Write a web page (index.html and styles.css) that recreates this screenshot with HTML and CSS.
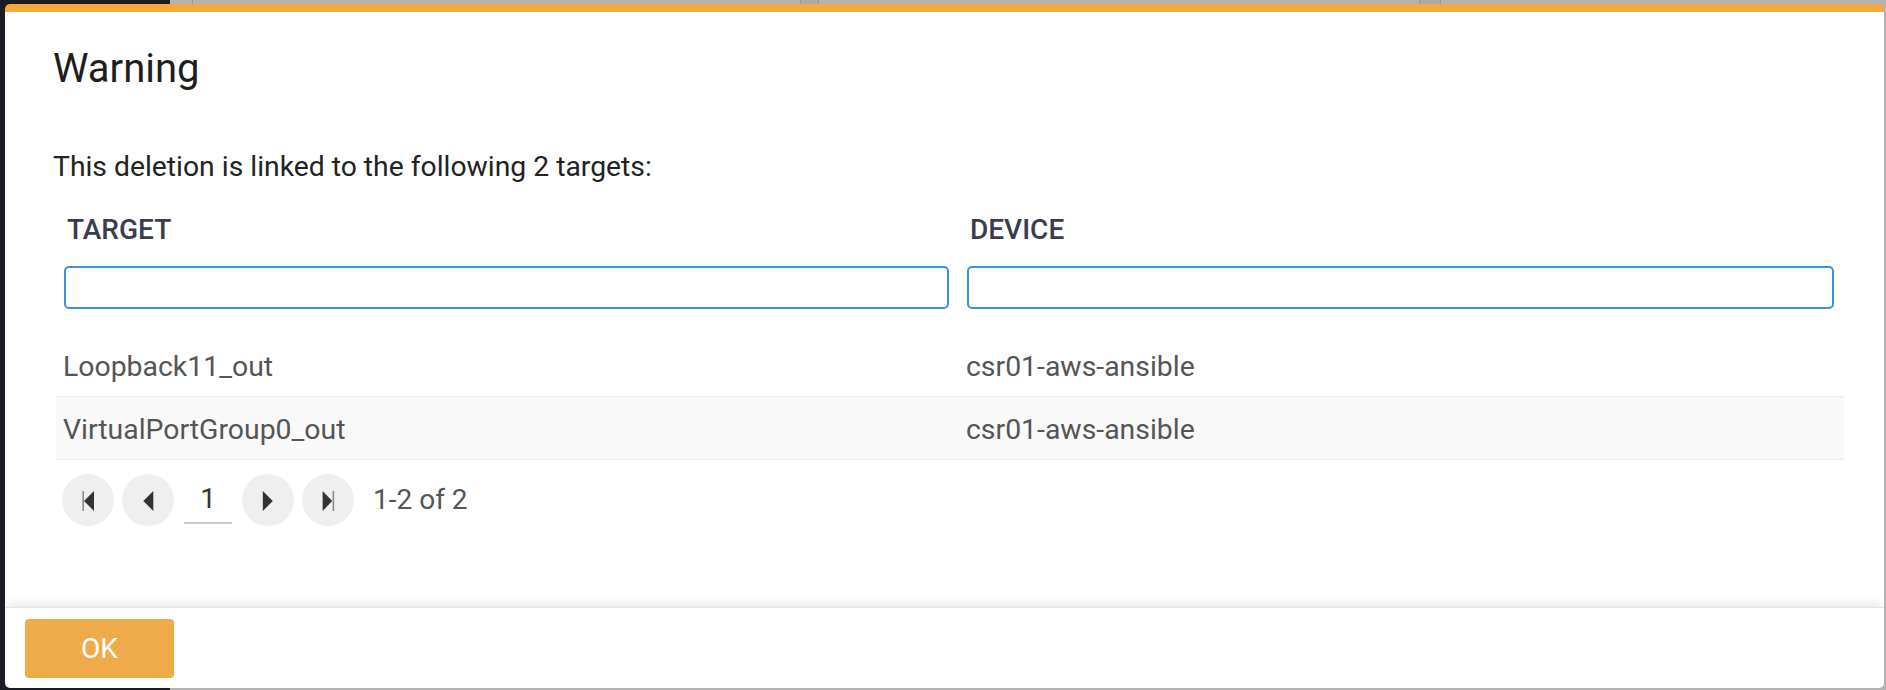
FILE: index.html
```html
<!DOCTYPE html>
<html lang="en">
<head>
<meta charset="utf-8">
<title>Warning</title>
<link rel="stylesheet" href="styles.css">
</head>
<body>
<div class="app">
  <aside class="sidebar"></aside>
  <main class="content">
    <div class="tabs">
      <span class="tab tab-a"></span>
      <span class="tab tab-b"></span>
      <span class="tab tab-c"></span>
      <span class="tab tab-d"></span>
      <span class="tab tab-e"></span>
      <span class="tab tab-f"></span>
    </div>
  </main>
</div>

<div class="modal" role="dialog" aria-labelledby="modal-title">
  <div class="modal-body">
    <h2 class="modal-title" id="modal-title">Warning</h2>
    <p class="modal-text">This deletion is linked to the following 2 targets:</p>
    <div class="grid">
      <div class="grid-row grid-head">
        <div class="head-cell">
          <div class="col-title">TARGET</div>
          <input class="filter" type="text" aria-label="Filter target">
        </div>
        <div class="head-cell">
          <div class="col-title">DEVICE</div>
          <input class="filter" type="text" aria-label="Filter device">
        </div>
      </div>
      <div class="grid-row data-row">
        <div class="cell">Loopback11_out</div>
        <div class="cell">csr01-aws-ansible</div>
      </div>
      <div class="grid-row data-row alt">
        <div class="cell">VirtualPortGroup0_out</div>
        <div class="cell">csr01-aws-ansible</div>
      </div>
      <div class="pager">
        <button class="page-btn" aria-label="First page">
          <svg viewBox="0 0 52 52" width="52" height="52"><rect x="20.4" y="17" width="1.6" height="20" fill="#8a8a8a"/><polygon points="32,17 22,27 32,37" fill="#333"/></svg>
        </button>
        <button class="page-btn" aria-label="Previous page">
          <svg viewBox="0 0 52 52" width="52" height="52"><polygon points="31.3,17 21.3,27 31.3,37" fill="#333"/></svg>
        </button>
        <div class="page-input">1</div>
        <button class="page-btn" aria-label="Next page">
          <svg viewBox="0 0 52 52" width="52" height="52"><polygon points="20.8,17 30.8,27 20.8,37" fill="#333"/></svg>
        </button>
        <button class="page-btn" aria-label="Last page">
          <svg viewBox="0 0 52 52" width="52" height="52"><polygon points="20.6,17 30.2,27 20.6,37" fill="#333"/><rect x="30.6" y="17" width="1.6" height="20" fill="#8a8a8a"/></svg>
        </button>
        <span class="page-info">1-2 of 2</span>
      </div>
    </div>
  </div>
  <div class="modal-footer">
    <button class="btn-ok">OK</button>
  </div>
</div>
</body>
</html>
```

FILE: styles.css
```css
* { box-sizing: border-box; }

html, body {
  margin: 0;
  padding: 0;
  width: 1886px;
  height: 690px;
  overflow: hidden;
}

body {
  font-family: Roboto, "Liberation Sans", Arial, sans-serif;
  background: #b3b3b3;
  position: relative;
}

/* dimmed application behind the dialog */
.app {
  display: flex;
  height: 690px;
}

.sidebar {
  width: 170px;
  flex: 0 0 170px;
  background: #1b1c24;
}

.content {
  flex: 1;
  background: #b3b3b3;
}

.tabs {
  display: flex;
  height: 4px;
}

.tab { display: block; height: 4px; }
.tab-a { width: 22px; }
.tab-b { width: 608px; border-left: 1px solid #999; }
.tab-c { width: 18px; border-left: 1px solid #999; background: #aaa; }
.tab-d { width: 601px; border-left: 1px solid #999; }
.tab-e { width: 21px; border-left: 1px solid #999; background: #aaa; }
.tab-f { flex: 1; border-left: 1px solid #999; }

/* dialog */
.modal {
  position: absolute;
  left: 5px;
  top: 4px;
  width: 1879px;
  height: 684px;
  background: #fff;
  border-top: 8px solid #f4a93b;
  border-radius: 5px;
  display: flex;
  flex-direction: column;
  overflow: hidden;
}

.modal-body {
  flex: 1;
  padding: 35px 40px 0 48px;
}

.modal-title {
  margin: 0;
  font-size: 40px;
  line-height: 44px;
  font-weight: 400;
  color: #1e1e1e;
}

.modal-text {
  margin: 60px 0 0;
  font-size: 28.3px;
  line-height: 32px;
  color: #222;
}

.grid {
  margin: 31px 0 0 3px;
}

.grid-row {
  display: grid;
  grid-template-columns: 903px 1fr;
}

.head-cell {
  padding: 0 10px 0 8px;
}

.col-title {
  font-size: 28px;
  line-height: 32px;
  font-weight: 500;
  color: #393d4c;
  padding-left: 3px;
}

.filter {
  display: block;
  width: 100%;
  height: 43px;
  margin-top: 20px;
  border: 2px solid #3f91d4;
  border-radius: 5px;
  background: #fff;
  outline: none;
  font: inherit;
}

.data-row {
  height: 63px;
  border-bottom: 1px solid #ececec;
  align-items: center;
}

.grid-head + .data-row { margin-top: 25px; }

.data-row.alt { background: #f9f9f9; }

.cell {
  padding: 3px 8px 0 7px;
  font-size: 28.4px;
  line-height: 32px;
  color: #555;
}

.pager {
  display: flex;
  align-items: center;
  margin-top: 14px;
  padding-left: 6px;
}

.page-btn {
  width: 52px;
  height: 52px;
  padding: 0;
  border: none;
  border-radius: 50%;
  background: #efefef;
  margin-right: 8px;
  display: flex;
}

.page-btn svg { display: block; }

.page-input {
  width: 48px;
  height: 48px;
  margin: 0 10px 0 2px;
  border-bottom: 2px solid #ccc;
  text-align: center;
  font-size: 28px;
  line-height: 46px;
  color: #333;
}

.page-info {
  margin-left: 11px;
  font-size: 28px;
  line-height: 32px;
  color: #555;
}

.modal-footer {
  flex: 0 0 81px;
  border-top: 1px solid #e4e4e4;
  box-shadow: 0 -6px 8px -2px rgba(0, 0, 0, 0.09);
  padding: 11px 0 0 20px;
  position: relative;
}

.btn-ok {
  width: 149px;
  height: 59px;
  border: none;
  border-radius: 4px;
  background: #efab49;
  color: #fff;
  font-family: Roboto, "Liberation Sans", Arial, sans-serif;
  font-size: 28px;
  font-weight: 400;
  padding: 0;
}
```
